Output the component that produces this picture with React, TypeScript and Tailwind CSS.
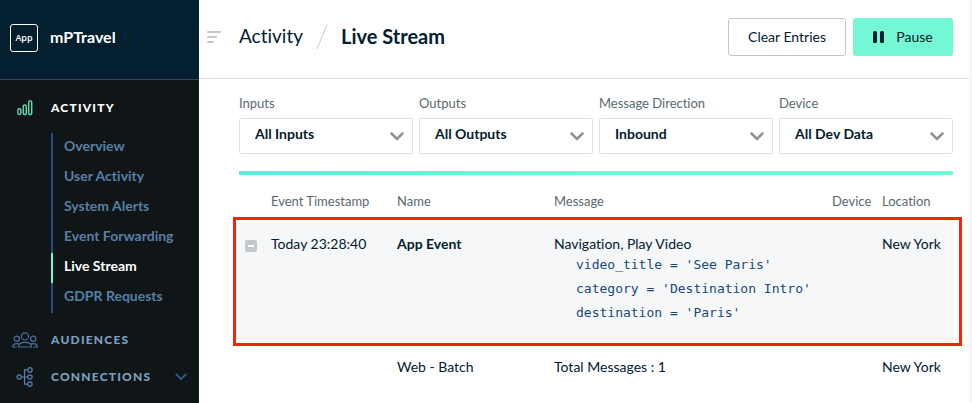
import type { ReactNode } from "react";

const subItems = ["Overview", "User Activity", "System Alerts", "Event Forwarding", "Live Stream", "GDPR Requests"];

const filters = [
  { id: "inputs", label: "Inputs", value: "All Inputs" },
  { id: "outputs", label: "Outputs", value: "All Outputs" },
  { id: "direction", label: "Message Direction", value: "Inbound" },
  { id: "device", label: "Device", value: "All Dev Data" },
];

function ActivityIcon() {
  return (
    <svg width="16" height="16" viewBox="0 0 16 16" fill="none" stroke="#5fdcbb" strokeWidth="1.4">
      <rect x="0.9" y="8.7" width="3" height="5.8" rx="1.4" />
      <rect x="6.3" y="5" width="3" height="9.5" rx="1.2" />
      <rect x="11.7" y="0.9" width="3" height="13.6" rx="1.2" />
    </svg>
  );
}

function AudiencesIcon() {
  return (
    <svg width="26" height="16" viewBox="0 0 26 16" fill="none" stroke="#4d7195" strokeWidth="1.2" strokeLinejoin="round">
      <circle cx="13" cy="4.4" r="3.6" />
      <circle cx="4.8" cy="6.8" r="2.6" />
      <circle cx="21.2" cy="6.8" r="2.6" />
      <path d="M6.4 15c0-3 2.7-4.6 6.6-4.6s6.6 1.6 6.6 4.6z" />
      <path d="M4.6 15H.7c0-2.2 1.5-3.4 4.2-3.4.8 0 1.5.1 2 .3M21.4 15h3.9c0-2.2-1.5-3.4-4.2-3.4-.8 0-1.5.1-2 .3" />
    </svg>
  );
}

function ConnectionsIcon() {
  return (
    <svg width="18" height="20" viewBox="0 0 18 20" fill="none" stroke="#5b82a8" strokeWidth="1.2">
      <circle cx="3.2" cy="10" r="2.1" />
      <circle cx="13.9" cy="2.9" r="2.2" />
      <circle cx="13.9" cy="10" r="2.2" />
      <circle cx="13.9" cy="17.1" r="2.2" />
      <path d="M5.3 10h6.4M11.7 2.9H8.500v14.2h3.200" />
    </svg>
  );
}

function Chevron({ className, width, height }: { className: string; width: number; height: number }) {
  return (
    <svg className={className} width={width} height={height} viewBox="0 0 14 9" fill="none" stroke="currentColor" strokeLinecap="round">
      <path d="M1.5 1.5 7 7l5.5-5.5" />
    </svg>
  );
}

function Section({ icon, label, className, children }: { icon: ReactNode; label: string; className: string; children?: ReactNode }) {
  return (
    <a href="#" className={`flex items-center pr-3 text-xs leading-5 font-black tracking-widest uppercase ${className}`}>
      <span className="flex w-[51px] shrink-0 justify-center pr-0.5">{icon}</span>
      <span className="grow">{label}</span>
      {children}
    </a>
  );
}

export default function App() {
  return (
    <div className="flex min-h-screen bg-white font-['Lato','Liberation_Sans',sans-serif] text-[#03202f] [font-variant-ligatures:none]">
      <aside className="w-[199px] shrink-0 bg-[#101518]">
        <div className="flex h-20 items-center gap-3 border-b border-[#36495a] bg-[#041f2f] px-2.5 pb-1 text-white">
          <span className="flex size-7 items-center justify-center rounded-[3px] border border-white font-['Open_Sans',sans-serif] text-[9px] font-semibold">
            App
          </span>
          <span className="pb-0.5 text-base font-bold">mPTravel</span>
        </div>
        <nav className="pt-[18px]">
          <Section icon={<ActivityIcon />} label="Activity" className="text-white" />
          <ul className="mt-[15px] ml-[51px] text-sm font-bold">
            {subItems.map((item) => (
              <li
                key={item}
                className={
                  item === "Live Stream"
                    ? "h-[30px] border-l-2 border-[#73f7d5] pl-[11px] text-white"
                    : "h-[30px] border-l-2 border-[#204e7d] pl-[11px] text-[#5780a5]"
                }
              >
                <a href="#" className="block leading-[26px]">{item}</a>
              </li>
            ))}
          </ul>
          <Section icon={<AudiencesIcon />} label="Audiences" className="mt-[17px] text-[#7ba0bf]" />
          <Section icon={<ConnectionsIcon />} label="Connections" className="mt-[17px] text-[#7ba0bf]">
            <Chevron className="stroke-2 text-[#315f93]" width={12} height={8} />
          </Section>
        </nav>
      </aside>

      <div className="min-w-0 grow border-r-[3px] border-[#f6f6f7]">
        <header className="flex h-[79px] items-center border-b border-[#dfe2e3] pr-4 pb-1 pl-2">
          <button type="button" aria-label="Toggle menu" className="text-[#c3c8cc]">
            <svg width="14" height="12" viewBox="0 0 14 12" fill="currentColor">
              <rect width="14" height="2" rx="1" />
              <rect y="5" width="10" height="2" rx="1" />
              <rect y="10" width="7" height="2" rx="1" />
            </svg>
          </button>
          <nav className="ml-[18px] flex grow items-center text-[19px]">
            <a href="#" className="pb-0.5">Activity</a>
            <svg className="mx-[13px]" width="12" height="26" viewBox="0 0 12 26" stroke="#c7cbce" fill="none">
              <path d="M11 .5 1 25" />
            </svg>
            <h1 className="pb-0.5 text-xl font-bold">Live Stream</h1>
          </nav>
          <div className="flex gap-[7px] text-sm">
            <button type="button" className="h-[38px] w-[118px] rounded-[3px] border border-[#c3c5c7]">Clear Entries</button>
            <button type="button" className="flex h-[38px] w-[100px] items-center justify-center gap-3 rounded-[3px] bg-[#73f7d5]">
              <svg width="11" height="12" viewBox="0 0 11 12" fill="#03202f">
                <rect width="4" height="12" rx="1.5" />
                <rect x="7" width="4" height="12" rx="1.5" />
              </svg>
              Pause
            </button>
          </div>
        </header>

        <main className="pr-4 pl-10">
          <div className="grid grid-cols-4 gap-1.5 pt-[14px]">
            {filters.map((f) => (
              <div key={f.id}>
                <label htmlFor={f.id} className="block text-[13px] leading-5 text-[#5a6971]">{f.label}</label>
                <div className="relative mt-[5px]">
                  <select id={f.id} className="block h-9 w-full appearance-none rounded-xs border border-[#dfe2e4] bg-white pr-8 pb-1 pl-[15px] text-sm font-bold">
                    <option>{f.value}</option>
                  </select>
                  <Chevron className="pointer-events-none absolute top-[14px] right-[9px] stroke-[2.5] text-[#8b9498]" width={14} height={9} />
                </div>
              </div>
            ))}
          </div>

          <div className="mt-[17px] h-1 bg-linear-to-r from-[#5fe8dc] to-[#73f7d5] to-50%" />

          <table className="w-full table-fixed text-left text-sm leading-[18px]">
            <colgroup>
              <col className="w-8" />
              <col className="w-[126px]" />
              <col className="w-[157px]" />
              <col />
              <col className="w-[50px]" />
              <col className="w-[71px]" />
            </colgroup>
            <thead className="text-[13px] text-[#5a6971]">
              <tr className="h-12">
                <td />
                <th className="pt-1 font-normal">Event Timestamp</th>
                <th className="pt-1 font-normal">Name</th>
                <th className="pt-1 font-normal">Message</th>
                <th className="pt-1 font-normal">Device</th>
                <th className="pt-1 font-normal">Location</th>
              </tr>
            </thead>
            <tbody className="align-top">
              <tr className="relative bg-[#f5f7f9]">
                <td className="pt-[17px] pl-1.5">
                  <button type="button" aria-label="Collapse event" className="flex size-3 items-center justify-center rounded-xs bg-[#c3c8cb]">
                    <span className="h-0.5 w-1.5 bg-white" />
                  </button>
                  <span className="pointer-events-none absolute -top-1.5 -right-[9px] -bottom-0.5 -left-1.5 border-[3px] border-[#fb2207]" />
                </td>
                <td className="pt-3">Today 23:28:40</td>
                <td className="pt-3 font-bold">App Event</td>
                <td className="pt-3 pb-[19px]">
                  Navigation, Play Video
                  <pre className="pl-[22px] font-['DejaVu_Sans_Mono',monospace] text-[13px] leading-6 text-[#174a7c]">
                    {"video_title = 'See Paris'\ncategory = 'Destination Intro'\ndestination = 'Paris'"}
                  </pre>
                </td>
                <td />
                <td className="pt-3">New York</td>
              </tr>
              <tr>
                <td />
                <td />
                <td className="pt-[14px]">Web - Batch</td>
                <td className="pt-[14px]">Total Messages : 1</td>
                <td />
                <td className="pt-[14px]">New York</td>
              </tr>
            </tbody>
          </table>
        </main>
      </div>
    </div>
  );
}
